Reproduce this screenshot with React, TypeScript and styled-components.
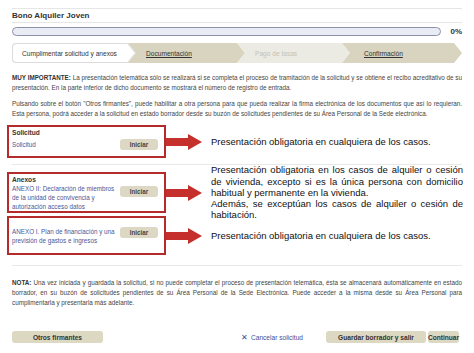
import React from 'react';
import styled, { createGlobalStyle } from 'styled-components';

const Global = createGlobalStyle`
  html, body { margin: 0; padding: 0; background: #fff; }
  body { font-family: "Liberation Sans", Arial, sans-serif; color: #333; }
`;

const Page = styled.div`
  width: 474px;
  height: 353px;
  box-sizing: border-box;
  padding: 8px 12px 0 12px;
  overflow: hidden;
`;

const TitleBar = styled.div`
  border-top: 1px solid #e6e6e6;
  border-bottom: 1px solid #e6e6e6;
  height: 13px;
  display: flex;
  align-items: center;
  font-size: 8px;
  font-weight: 700;
  color: #333;
`;

const ProgressRow = styled.div`
  display: flex;
  align-items: center;
  margin-top: 4px;
  gap: 9px;
`;

const ProgressTrack = styled.div`
  width: 430px;
  height: 9px;
  box-sizing: border-box;
  border: 1px solid #8c91aa;
  border-radius: 5px;
  background: #e9ecf4;
`;

const Percent = styled.span`
  font-size: 8px;
  font-weight: 700;
  color: #333;
`;

const Steps = styled.div`
  display: flex;
  height: 20px;
  margin-top: 7px;
`;

const chevron = 'polygon(0 0, calc(100% - 8px) 0, 100% 50%, calc(100% - 8px) 100%, 0 100%, 8px 50%)';

const Step = styled.div<{ $bg: string; $w: number; $pl?: number; $muted?: boolean }>`
  width: ${p => p.$w}px;
  margin-left: -8px;
  box-sizing: border-box;
  padding-left: ${p => p.$pl ?? 18}px;
  background: ${p => p.$bg};
  clip-path: ${chevron};
  display: flex;
  align-items: center;
  font-size: 6.6px;
  color: ${p => (p.$muted ? '#c4c2b8' : '#333')};
  text-decoration: ${p => (p.$muted ? 'none' : 'underline')};
`;

const FirstStepOuter = styled.div`
  width: 124px;
  height: 20px;
  background: #dcdcdc;
  clip-path: path('M4 0 H116 L124 10 L116 20 H4 Q0 20 0 16 V4 Q0 0 4 0 Z');
  position: relative;
`;

const FirstStepInner = styled.div`
  position: absolute;
  inset: 0;
  background: #fff;
  clip-path: path('M4.5 1 H115.5 L122.8 10 L115.5 19 H4.5 Q1 19 1 15.5 V4.5 Q1 1 4.5 1 Z');
  display: flex;
  align-items: center;
  padding-left: 10px;
  font-size: 6.6px;
  color: #333;
`;

const Para = styled.p<{ $mt: number }>`
  margin: ${p => p.$mt}px 0 0 0;
  font-size: 6.3px;
  line-height: 10px;
  text-align: justify;
  color: #444;
`;

const Label = styled.strong`
  font-weight: 700;
  color: #333;
`;

const Row = styled.div<{ $mt: number }>`
  display: grid;
  grid-template-columns: 159px 36px 1fr;
  align-items: center;
  margin: ${p => p.$mt}px -1px 0 -5px;
`;

const RedBox = styled.div<{ $pt: number; $pb: number }>`
  box-sizing: border-box;
  border: 2px solid #b52a2b;
  padding: ${p => p.$pt}px 6px ${p => p.$pb}px 3px;
`;

const BoxTitle = styled.div`
  font-size: 6.6px;
  font-weight: 700;
  line-height: 9px;
  color: #333;
`;

const BoxLine = styled.div<{ $mt: number; $center?: boolean }>`
  display: flex;
  justify-content: space-between;
  align-items: ${p => (p.$center ? 'center' : 'flex-start')};
  margin-top: ${p => p.$mt}px;
`;

const LinkText = styled.span<{ $lh: number }>`
  font-size: 6.3px;
  line-height: ${p => p.$lh}px;
  color: #4b5797;
`;

const StartButton = styled.span<{ $mt: number }>`
  width: 38px;
  height: 11px;
  margin-top: ${p => p.$mt}px;
  border-radius: 3px;
  background: #dcd8c3;
  display: flex;
  align-items: center;
  justify-content: center;
  font-size: 6.3px;
  font-weight: 700;
  color: #444;
`;

const Note = styled.div<{ $tight?: boolean }>`
  margin: ${p => (p.$tight ? '-9px 0 -9px 9px' : '0 0 0 9px')};
  font-size: 9.5px;
  line-height: 11.3px;
  color: #111;
  text-align: justify;
`;

const Divider = styled.div<{ $mt: number }>`
  margin-top: ${p => p.$mt}px;
  height: 1px;
  background: #e8e8e8;
`;

const Footer = styled.div`
  display: flex;
  align-items: center;
  margin-top: 23px;
  height: 12px;
  padding-right: 3px;
  gap: 2px;
`;

const Button = styled.span<{ $w: number }>`
  width: ${p => p.$w}px;
  height: 12px;
  border-radius: 3px;
  background: #dcd8c2;
  display: flex;
  align-items: center;
  justify-content: center;
  font-size: 6.6px;
  font-weight: 700;
  color: #333;
`;

const Cancel = styled.span`
  margin-left: auto;
  margin-right: 21px;
  font-size: 6.6px;
  color: #3c4f9a;
  display: flex;
  align-items: center;
  gap: 3px;
`;

const CancelIcon = styled.span`
  font-size: 8px;
`;

const Arrow = () => (
  <svg width="36" height="16" viewBox="0 0 36 16">
    <rect x="0" y="4" width="24" height="8" fill="#c5302c" />
    <polygon points="22,0 36,8 22,16" fill="#c5302c" />
  </svg>
);

export default function App() {
  return (
    <Page>
      <Global />
      <TitleBar>Bono Alquiler Joven</TitleBar>
      <ProgressRow>
        <ProgressTrack />
        <Percent>0%</Percent>
      </ProgressRow>
      <Steps>
        <FirstStepOuter>
          <FirstStepInner>Cumplimentar solicitud y anexos</FirstStepInner>
        </FirstStepOuter>
        <Step $bg="#d8d4bf" $w={117}>Documentación</Step>
        <Step $bg="#ecebe3" $w={113} $muted>Pago de tasas</Step>
        <Step $bg="#d8d4bf" $w={120} $pl={22}>Confirmación</Step>
      </Steps>
      <Para $mt={10}>
        <Label>MUY IMPORTANTE:</Label> La presentación telemática sólo se realizará si se completa el proceso de tramitación de la solicitud y se obtiene el recibo acreditativo de su presentación. En la parte inferior de dicho documento se mostrará el número de registro de entrada.
      </Para>
      <Para $mt={6}>
        Pulsando sobre el botón "Otros firmantes", puede habilitar a otra persona para que pueda realizar la firma electrónica de los documentos que así lo requieran. Esta persona, podrá acceder a la solicitud en estado borrador desde su buzón de solicitudes pendientes de su Área Personal de la Sede electrónica.
      </Para>

      <Row $mt={6}>
        <RedBox $pt={1} $pb={6}>
          <BoxTitle>Solicitud</BoxTitle>
          <BoxLine $mt={2} $center>
            <LinkText $lh={11}>Solicitud</LinkText>
            <StartButton $mt={0}>Iniciar</StartButton>
          </BoxLine>
        </RedBox>
        <Arrow />
        <Note>Presentación obligatoria en cualquiera de los casos.</Note>
      </Row>
      <Divider $mt={6} />
      <Row $mt={7}>
        <RedBox $pt={1} $pb={0}>
          <BoxTitle>Anexos</BoxTitle>
          <BoxLine $mt={0}>
            <LinkText $lh={9}>
              ANEXO II: Declaración de miembros<br />de la unidad de convivencia y<br />autorización acceso datos
            </LinkText>
            <StartButton $mt={2}>Iniciar</StartButton>
          </BoxLine>
        </RedBox>
        <Arrow />
        <Note $tight>
          Presentación obligatoria en los casos de alquiler o cesión de vivienda, excepto si es la única persona con domicilio habitual y permanente en la vivienda.
          <br />
          Además, se exceptúan los casos de alquiler o cesión de habitación.
        </Note>
      </Row>
      <Row $mt={3}>
        <RedBox $pt={9} $pb={8}>
          <BoxLine $mt={0}>
            <LinkText $lh={9}>
              ANEXO I. Plan de financiación y una<br />previsión de gastos e ingresos
            </LinkText>
            <StartButton $mt={0}>Iniciar</StartButton>
          </BoxLine>
        </RedBox>
        <Arrow />
        <Note>Presentación obligatoria en cualquiera de los casos.</Note>
      </Row>
      <Divider $mt={10} />
      <Para $mt={12}>
        <Label>NOTA:</Label> Una vez iniciada y guardada la solicitud, si no puede completar el proceso de presentación telemática, ésta se almacenará automáticamente en estado borrador, en su buzón de solicitudes pendientes de su Área Personal de la Sede Electrónica. Puede acceder a la misma desde su Área Personal para cumplimentarla y presentarla más adelante.
      </Para>
      <Footer>
        <Button $w={91}>Otros firmantes</Button>
        <Cancel>
          <CancelIcon>✕</CancelIcon> Cancelar solicitud
        </Cancel>
        <Button $w={100}>Guardar borrador y salir</Button>
        <Button $w={31}>Continuar</Button>
      </Footer>
    </Page>
  );
}
